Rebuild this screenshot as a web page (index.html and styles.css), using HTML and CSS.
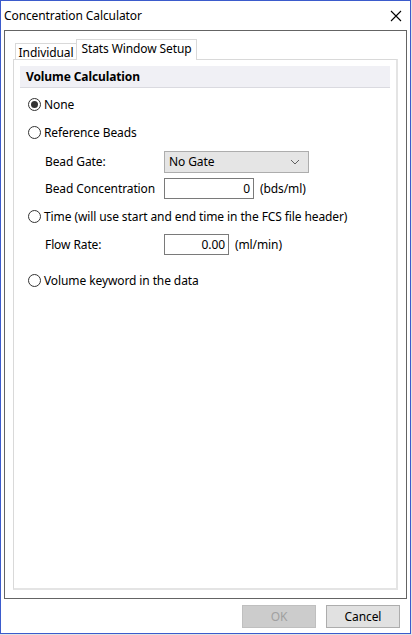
FILE: index.html
```html
<!DOCTYPE html>
<html>
<head>
<meta charset="utf-8">
<link rel="stylesheet" href="styles.css">
</head>
<body>
<div class="window">
  <div class="titlebar">
    <span class="title">Concentration Calculator</span>
    <svg class="close" width="12" height="12" viewBox="0 0 12 12"><path d="M1 1 L11 11 M11 1 L1 11" stroke="#000" stroke-width="1.1" fill="none"/></svg>
  </div>
  <div class="frame">
    <div class="tabs">
      <div class="tab">Individual</div>
      <div class="tab active">Stats Window Setup</div>
    </div>
    <div class="panel">
      <div class="band">Volume Calculation</div>
      <div class="row r-none"><span class="radio checked"></span><span>None</span></div>
      <div class="row r-ref"><span class="radio"></span><span>Reference Beads</span></div>
      <div class="row sub r-gate">
        <span class="lbl">Bead Gate:</span>
        <div class="combo"><span>No Gate</span><svg width="10" height="6" viewBox="0 0 10 6"><path d="M1 1 L5 5 L9 1" stroke="#606060" stroke-width="1" fill="none"/></svg></div>
      </div>
      <div class="row sub r-conc">
        <span class="lbl">Bead Concentration</span>
        <div class="input w-conc">0</div><span class="unit">(bds/ml)</span>
      </div>
      <div class="row r-time"><span class="radio"></span><span>Time (will use start and end time in the FCS file header)</span></div>
      <div class="row sub r-flow">
        <span class="lbl">Flow Rate:</span>
        <div class="input w-flow">0.00</div><span class="unit">(ml/min)</span>
      </div>
      <div class="row r-vol"><span class="radio"></span><span>Volume keyword in the data</span></div>
    </div>
  </div>
  <div class="buttons">
    <div class="btn disabled">OK</div>
    <div class="btn">Cancel</div>
  </div>
</div>
</body>
</html>
```
FILE: styles.css
```css
html, body { margin: 0; padding: 0; }
body {
  width: 412px; height: 635px;
  background: #e3e3e3;
  font-family: "Noto Sans", "Open Sans", sans-serif;
  font-size: 12px;
  letter-spacing: -0.1px;
  color: #000;
  overflow: hidden;
}
.window {
  box-sizing: border-box;
  width: 411px; height: 634px;
  border: 1px solid #3b5bcc;
  background: #fff;
  display: flex; flex-direction: column;
}
.titlebar {
  height: 29px;
  display: flex; align-items: center; justify-content: space-between;
  padding: 0 8px 0 3px;
}
.title { font-size: 12px; }
.frame {
  box-sizing: border-box;
  margin-left: 3px;
  width: 403px; height: 569px;
  border: 1px solid #646464;
  padding: 8px 8px 0 8px;
  display: flex; flex-direction: column;
}
.tabs { display: flex; align-items: flex-end; height: 20px; padding-left: 2px; position: relative; z-index: 1; }
.tab {
  box-sizing: border-box;
  flex-shrink: 0;
  white-space: nowrap;
  height: 16px;
  border: 1px solid #d9d9d9; border-bottom: none;
  display: flex; align-items: center; justify-content: center;
  background: #fff;
  width: 62px;
  padding-top: 1px;
}
.tab.active { height: 21px; margin-bottom: -1px; width: 121px; padding-bottom: 3px; padding-top: 0; margin-left: -1px; }
.panel {
  box-sizing: border-box;
  width: 385px; height: 531px;
  border: 1px solid #d9d9d9;
  border-right: 2px solid #e4e4e4;
  border-bottom: 2px solid #e4e4e4;
  padding: 6px 6px 0 6px;
}
.band {
  box-sizing: border-box;
  height: 22px;
  background: #f0f0f5;
  border-bottom: 1px solid #dadae0;
  font-weight: bold;
  padding-left: 6px;
  display: flex; align-items: center;
}
.row { display: flex; align-items: center; height: 20px; padding-left: 8px; white-space: nowrap; }
.row.sub { padding-left: 25px; height: 21px; }
.lbl { width: 119px; }
.r-none { margin-top: 6px; }
.r-ref { margin-top: 8px; }
.r-gate { margin-top: 9px; height: 22px; }
.r-conc { margin-top: 6px; }
.r-time { margin-top: 7px; }
.r-flow { margin-top: 8px; }
.r-vol { margin-top: 15px; }
.radio {
  box-sizing: border-box;
  flex-shrink: 0;
  width: 13px; height: 13px;
  border: 1px solid #333;
  border-radius: 50%;
  margin-right: 3px;
  display: flex; align-items: center; justify-content: center;
}
.radio.checked::after {
  content: ""; width: 7px; height: 7px; border-radius: 50%; background: #333;
}
.combo {
  box-sizing: border-box;
  width: 145px; height: 22px;
  background: #e5e5e5;
  border: 1px solid #adadad;
  display: flex; align-items: center; justify-content: space-between;
  padding: 0 8px 0 4px;
}
.input {
  box-sizing: border-box;
  height: 21px;
  border: 1px solid #7a7a7a;
  text-align: right;
  padding-right: 3px;
  line-height: 19px;
}
.w-conc { width: 90px; }
.w-flow { width: 65px; }
.unit { margin-left: 6px; }
.buttons {
  flex: 1;
  display: flex; justify-content: flex-end; align-items: flex-start;
  padding: 6px 10px 0 0; gap: 10px;
}
.btn {
  box-sizing: border-box;
  width: 74px; height: 23px;
  background: #e1e1e1;
  border: 1px solid #adadad;
  display: flex; align-items: center; justify-content: center;
}
.btn.disabled { background: #cccccc; border-color: #bfbfbf; color: #a0a0a0; }
```
